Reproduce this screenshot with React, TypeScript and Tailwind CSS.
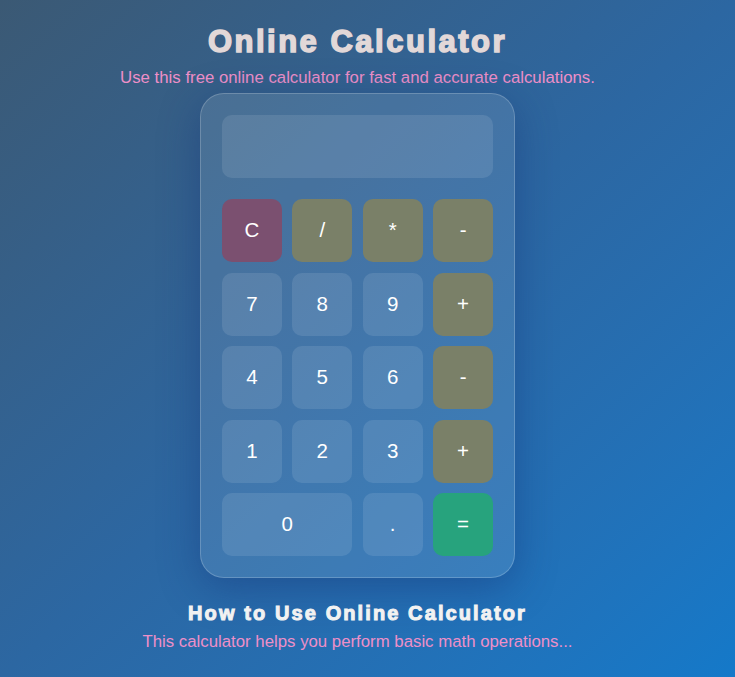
const keys: { label: string; kind: "clear" | "op" | "num" | "eq"; wide?: boolean }[] = [
  { label: "C", kind: "clear" },
  { label: "/", kind: "op" },
  { label: "*", kind: "op" },
  { label: "-", kind: "op" },
  { label: "7", kind: "num" },
  { label: "8", kind: "num" },
  { label: "9", kind: "num" },
  { label: "+", kind: "op" },
  { label: "4", kind: "num" },
  { label: "5", kind: "num" },
  { label: "6", kind: "num" },
  { label: "-", kind: "op" },
  { label: "1", kind: "num" },
  { label: "2", kind: "num" },
  { label: "3", kind: "num" },
  { label: "+", kind: "op" },
  { label: "0", kind: "num", wide: true },
  { label: ".", kind: "num" },
  { label: "=", kind: "eq" },
];

const kindClass = {
  clear: "bg-[#7b5070]",
  op: "bg-[#7a8068]",
  num: "bg-white/10",
  eq: "bg-[#27a37d]",
};

export default function App() {
  return (
    <div className="min-h-screen w-full bg-linear-to-br from-[#3b5974] via-[#2c67a2] to-[#1479c9] flex flex-col items-center pt-6 pr-5 font-['Liberation_Sans',Arial,sans-serif]">
      <h1 className="text-[31px] leading-[36px] font-bold tracking-[2.5px] text-[#e2d8d8] [-webkit-text-stroke:1.5px_#e2d8d8] font-['Arial_Black','Liberation_Sans',sans-serif]">
        Online Calculator
      </h1>
      <p className="mt-2 text-[16.8px] leading-5 text-[#ee8fc8]">
        Use this free online calculator for fast and accurate calculations.
      </p>

      <div className="mt-[5px] w-[315px] rounded-3xl border border-white/20 bg-white/10 p-[21px] shadow-[0_10px_40px_rgba(20,50,120,0.45)]">
        <div className="h-[63px] rounded-[10px] bg-white/10" />
        <div className="mt-[21px] grid grid-cols-4 gap-x-[10.5px] gap-y-[10.5px]">
          {keys.map((k, i) => (
            <button
              key={i}
              className={`h-[63px] rounded-[10px] text-white text-[20.5px] flex items-center justify-center ${kindClass[k.kind]} ${k.wide ? "col-span-2" : ""}`}
            >
              {k.label}
            </button>
          ))}
        </div>
      </div>

      <h2 className="mt-[23px] text-[20px] leading-6 font-bold tracking-[2.1px] text-[#f2f2f2] [-webkit-text-stroke:1px_#f2f2f2] font-['Arial_Black','Liberation_Sans',sans-serif]">
        How to Use Online Calculator
      </h2>
      <p className="mt-[7px] text-[16.8px] leading-5 text-[#ee8fc8]">
        This calculator helps you perform basic math operations...
      </p>
    </div>
  );
}
